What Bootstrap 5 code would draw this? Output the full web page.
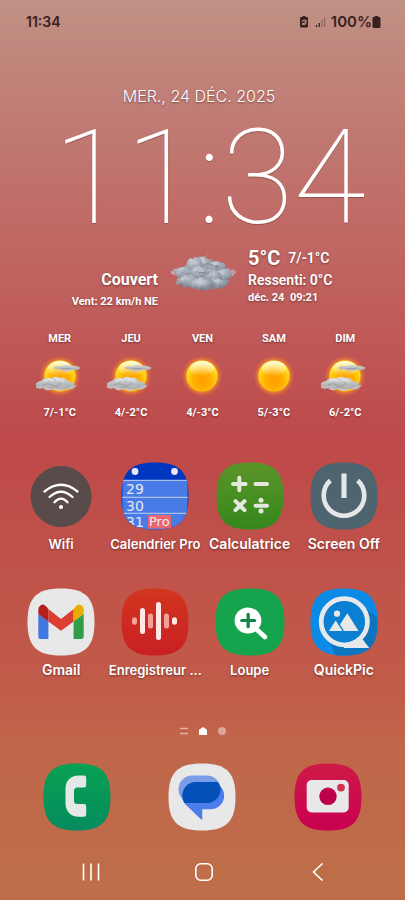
<!DOCTYPE html>
<html lang="fr">
<head>
<meta charset="utf-8">
<meta name="viewport" content="width=device-width, initial-scale=1">
<title>Écran d'accueil</title>
<link href="https://cdn.jsdelivr.net/npm/bootstrap@5.3.0/dist/css/bootstrap.min.css" rel="stylesheet">
<style>
body{font-family:Roboto,sans-serif;color:#fff;background:linear-gradient(#c09184 0%,#c08078 10%,#c06a66 25%,#be494a 49%,#c15b49 76%,#c0664a 83%,#be6f49 100%) no-repeat;min-height:100vh}
.status{font:600 15px/20px Inter,sans-serif;color:#38211f;padding:12px 24px 0 26px}
.status .time{font-size:14px}
.shade{text-shadow:0 1px 2px rgba(60,20,20,.55)}
.date{font:300 16px/20px Inter,sans-serif;margin-top:54px;padding-right:7px}
.clock{font:100 132px/110px Roboto,sans-serif;height:110px;margin-top:17px;padding-left:14px;text-shadow:0 1px 1px rgba(60,20,20,.3)}
.now{display:grid;grid-template-columns:158px 66px 1fr;column-gap:12px;margin-top:13px;height:64px}
.t-lg{font-size:20px;line-height:24px}
.t-md{font-size:16px;line-height:20px}
.t-sm{font-size:14px;line-height:20px}
.t-xs{font-size:11px;line-height:16px}
.forecast{padding:0 24px;margin-top:21px}
.forecast svg{display:block;margin:4px auto}
.apps{padding:0 14px;margin-top:41px;row-gap:34px}
.app{color:#fff;font:600 14px/20px Inter,sans-serif;text-shadow:0 1px 2px rgba(60,20,20,.6);white-space:nowrap;min-width:0}
.app svg,.dock svg{display:block;margin:0 auto}
.app span{display:block;margin-top:4px}
.app .small-label{font-size:13px}
.pager{margin-top:46px;gap:11px;height:10px}
.dock{padding:0 14px;margin-top:27px}
.keys{padding:0 30px 0 34px;margin-top:28px}
.bare{background:none;border:0;padding:0}
</style>
<script src="https://cdn.jsdelivr.net/npm/bootstrap@5.3.0/dist/js/bootstrap.bundle.min.js"></script>
</head>
<body class="d-flex flex-column overflow-x-hidden">
<svg width="0" height="0" class="position-absolute" aria-hidden="true">
<defs>
<path id="tile" d="M34 .5C58.500 .5 67.500 9.500 67.500 34S58.500 67.500 34 67.500 .5 58.500 .5 34 9.500 .5 34 .5Z"/>
<clipPath id="tileclip"><use href="#tile"/></clipPath>
<radialGradient id="sunfill" cx=".5" cy=".65" r=".6"><stop offset="0" stop-color="#ff9c00"/><stop offset=".5" stop-color="#ffb000"/><stop offset=".85" stop-color="#ffd91a"/><stop offset="1" stop-color="#fff03c"/></radialGradient>
<radialGradient id="glow"><stop offset=".66" stop-color="#ffa61c"/><stop offset=".8" stop-color="#f48a2c" stop-opacity=".6"/><stop offset="1" stop-color="#e8602c" stop-opacity="0"/></radialGradient>
<linearGradient id="shine" x2="0" y2="1"><stop offset="0" stop-color="#fff" stop-opacity=".85"/><stop offset="1" stop-color="#fff" stop-opacity="0"/></linearGradient>
<linearGradient id="wisp" x2="0" y2="1"><stop offset="0" stop-color="#dcdee0"/><stop offset=".6" stop-color="#b2b5b8"/><stop offset="1" stop-color="#cdc6c4"/></linearGradient>
<radialGradient id="puff" cx=".42" cy=".25" r=".75"><stop offset="0" stop-color="#ccd1d8"/><stop offset=".5" stop-color="#a0a8b3"/><stop offset="1" stop-color="#76808d"/></radialGradient>
<filter id="rough" x="-10%" y="-10%" width="120%" height="120%"><feTurbulence type="fractalNoise" baseFrequency=".16" numOctaves="3" seed="4"/><feDisplacementMap in="SourceGraphic" scale="6" xChannelSelector="R" yChannelSelector="G"/></filter>
<filter id="rough2" x="-10%" y="-20%" width="120%" height="140%"><feTurbulence type="fractalNoise" baseFrequency=".25" numOctaves="2" seed="7"/><feDisplacementMap in="SourceGraphic" scale="2" xChannelSelector="R" yChannelSelector="G"/></filter>
<g id="sun"><circle cx="24" cy="22" r="21" fill="url(#glow)"/><circle cx="24" cy="22" r="15.500" fill="url(#sunfill)"/><ellipse cx="24" cy="14.500" rx="12" ry="7.500" fill="url(#shine)"/></g>
<g id="suncloud"><use href="#sun"/><g filter="url(#rough2)"><path d="M17 14Q20 11 25 12Q30 9 35 12Q40 11 45 14Q41 17 36 16Q30 19 25 16Q20 16 17 14Z" fill="url(#wisp)"/><path d="M-2 32Q1 27 5 27Q9 22 14 25Q20 21 24 24Q28 22 32 27Q38 28 40 32Q36 37 29 35Q23 39 17 35Q10 38 7 34Q2 36-2 32Z" fill="url(#wisp)"/><path d="M7 31Q12 28 16 31T25 29M13 34Q19 32 24 34T33 32M25 14.500H35" fill="none" stroke="#8a8e93" stroke-opacity=".6"/><path d="M9 27Q14 24 17 27M20 26Q24 24 28 28" fill="none" stroke="#eeeeef"/></g></g>
<linearGradient id="calc" x2="0" y2="1"><stop offset="0" stop-color="#5b9428"/><stop offset="1" stop-color="#35881d"/></linearGradient>
<linearGradient id="rec" x2="0" y2="1"><stop offset="0" stop-color="#d2361f"/><stop offset="1" stop-color="#c91f24"/></linearGradient>
<linearGradient id="tel" x2="0" y2="1"><stop offset="0" stop-color="#08a052"/><stop offset="1" stop-color="#058c5e"/></linearGradient>
<linearGradient id="cam" x2="0" y2="1"><stop offset="0" stop-color="#cf1a48"/><stop offset="1" stop-color="#c80050"/></linearGradient>
</defs>
</svg>

<header class="status d-flex justify-content-between">
<span class="time">11:34</span>
<span class="d-flex align-items-center">
<svg width="28" height="14" viewBox="0 0 28 14" class="me-1" aria-hidden="true"><path d="M3.500 1h3v1h1.300q1.200 0 1.200 1.200v8.100q0 1.200-1.200 1.200H2.200Q1 12.500 1 11.300V3.200Q1 2 2.200 2h1.300Z" fill="#38211f"/><path d="M3 6.500Q5 4.500 7 5.500Q7.500 8.500 5 9.500Q3.500 9.500 3 8.500" fill="none" stroke="#c99a90" stroke-width="1.100"/><path d="M4 9 6 6.800" stroke="#c99a90"/><path d="M17.500 10v2M20.200 8v4" stroke="#38211f" stroke-width="1.300"/><path d="M23 5v7M25.600 2.500v9.500" stroke="#38211f" stroke-opacity=".35" stroke-width="1.300"/></svg>
100%
<svg width="9" height="12" viewBox="0 0 9 12" aria-hidden="true"><path d="M2.800 0h3.400v1h1q1.300 0 1.300 1.300v8.200Q8.500 12 7.200 12H1.800Q.5 12 .5 10.500V2.300Q.5 1 1.800 1h1Z" fill="#38211f"/></svg>
</span>
</header>

<main>
<section aria-label="Horloge et météo">
<div class="date text-center shade">MER., 24 DÉC. 2025</div>
<div class="clock text-center">11:34</div>
<div class="now shade">
<div class="d-flex flex-column justify-content-end text-end"><div class="t-md fw-bold">Couvert</div><div class="t-xs fw-bold mt-1">Vent: 22 km/h NE</div></div>
<svg width="66" height="46" viewBox="0 0 66 46" class="mt-1" role="img" aria-label="Nuages"><g filter="url(#rough)"><ellipse cx="9" cy="23" rx="9" ry="4" fill="#d0a5a6"/><ellipse cx="58" cy="23" rx="9" ry="5" fill="#bd9da1"/><ellipse cx="34" cy="25" rx="25" ry="13" fill="#7d8692"/><g fill="url(#puff)"><circle cx="34" cy="14" r="8"/><ellipse cx="24" cy="15" rx="9" ry="7"/><ellipse cx="46" cy="17" rx="10" ry="6"/><ellipse cx="13" cy="22" rx="9" ry="6"/><ellipse cx="53" cy="25" rx="9" ry="6"/><ellipse cx="29" cy="23" rx="11" ry="7"/><ellipse cx="43" cy="26" rx="10" ry="6"/><ellipse cx="17" cy="31" rx="11" ry="6"/><ellipse cx="48" cy="33" rx="10" ry="5"/><ellipse cx="32" cy="34" rx="13" ry="6"/></g><path d="M34 14l8 1 6 3M28 21l8 3 7-2" fill="none" stroke="#5a6370" stroke-opacity=".5" stroke-width="1.500"/></g></svg>
<div><div class="d-flex align-items-center gap-2"><span class="t-lg fw-bold">5°C</span><span class="t-sm fw-semibold">7/-1°C</span></div><div class="t-sm fw-semibold">Ressenti: 0°C</div><div class="t-xs fw-bold">déc. 24&nbsp; 09:21</div></div>
</div>
<div class="forecast row row-cols-5 g-0 text-center t-xs fw-bold shade">
<div>MER<svg width="48" height="50" viewBox="0 0 48 44" role="img" aria-label="Éclaircies"><use href="#suncloud"/></svg>7/-1°C</div>
<div>JEU<svg width="48" height="50" viewBox="0 0 48 44" role="img" aria-label="Éclaircies"><use href="#suncloud"/></svg>4/-2°C</div>
<div>VEN<svg width="48" height="50" viewBox="0 0 48 44" role="img" aria-label="Soleil"><use href="#sun"/></svg>4/-3°C</div>
<div>SAM<svg width="48" height="50" viewBox="0 0 48 44" role="img" aria-label="Soleil"><use href="#sun"/></svg>5/-3°C</div>
<div>DIM<svg width="48" height="50" viewBox="0 0 48 44" role="img" aria-label="Éclaircies"><use href="#suncloud"/></svg>6/-2°C</div>
</div>
</section>

<section class="apps row row-cols-4 gx-0" aria-label="Applications">
<button type="button" class="bare app"><svg width="68" height="68" aria-hidden="true"><circle cx="34" cy="34.500" r="30.500" fill="#594b49"/><g fill="none" stroke="#fff" stroke-width="2.300" stroke-linecap="round"><path d="M17.500 29.500Q34 16 50.500 29.500M22.500 35Q34 24.500 45.500 35M27.500 40.300Q34 33 40.500 40.300"/></g><circle cx="34" cy="45" r="2.100" fill="#fff"/></svg><span class="small-label">Wifi</span></button>
<button type="button" class="bare app"><svg width="68" height="68" aria-hidden="true"><g clip-path="url(#tileclip)"><path d="M0 0h68v68H0z" fill="#0036bd"/><path d="M1.500 18h65v50h-65z" fill="#497be6"/><path d="M1 18.300h66M1 35.300h66M1 51.300h66" stroke="#c2d3ec"/><circle cx="14" cy="9.500" r="3.400" fill="#e8e8ee"/><circle cx="53.500" cy="9.500" r="3.400" fill="#e8e8ee"/><rect x="27" y="53" width="23" height="13.500" rx="1" fill="#ea6670"/><g font-family="DejaVu Sans" font-size="14" font-weight="400" fill="#e6e9f2" style="text-shadow:none"><text x="5" y="32">29</text><text x="5" y="49">30</text><text x="5" y="65">31</text><text x="28" y="64" font-size="13">Pro</text></g></g></svg><span class="small-label">Calendrier Pro</span></button>
<button type="button" class="bare app"><svg width="68" height="68" aria-hidden="true"><use href="#tile" fill="url(#calc)"/><path d="M17 22h12.600M23.300 15.700v12.600M39.500 22h11.500M19.500 39.200l9 9M28.500 39.200l-9 9M39.500 43.700h11.500" stroke="#e5e8df" stroke-width="4" stroke-linecap="round"/><circle cx="45" cy="38.300" r="2.500" fill="#e5e8df"/><circle cx="45" cy="49.100" r="2.500" fill="#e5e8df"/></svg><span>Calculatrice</span></button>
<button type="button" class="bare app"><svg width="68" height="68" aria-hidden="true"><use href="#tile" fill="#4e646f"/><path d="M20.300 18.500A20.300 20.300 0 1 0 47.700 18.500" fill="none" stroke="#e4e6e7" stroke-width="4.600"/><path d="M34 11.500V36" stroke="#e4e6e7" stroke-width="5.200"/></svg><span>Screen Off</span></button>
<button type="button" class="bare app"><svg width="68" height="68" aria-hidden="true"><use href="#tile" fill="#e9e8e8"/><path d="M11.300 26 21.400 33V51H13.300q-2 0-2-2Z" fill="#4279e0"/><path d="M56.700 26 46.600 33V51H54.700q2 0 2-2Z" fill="#319c49"/><path d="M21.400 21 34 31 46.600 21V33.500L34 42.800 21.400 33.500Z" fill="#dc3e32"/><path d="M11.300 26V21.500Q11.800 17 16 16.500Q18 16.500 21.400 21V33.500Z" fill="#b51f1f"/><path d="M56.700 26V21.500Q56.200 17 52 16.500Q50 16.500 46.600 21V33.500Z" fill="#e5ad06"/></svg><span>Gmail</span></button>
<button type="button" class="bare app"><svg width="68" height="68" aria-hidden="true"><use href="#tile" fill="url(#rec)"/><g stroke-width="5" stroke-linecap="round"><path d="M21.500 22.500V43.500M37.500 16.500V49.500M53.500 31.800V34.200" stroke="#ffe8e5"/><path d="M13.500 31.800V34.200M29.500 28V38M45.500 28V38" stroke="#f3a19a"/></g></svg><span class="small-label">Enregistreur ...</span></button>
<button type="button" class="bare app"><svg width="70" height="68" viewBox="0 0 68 68" preserveAspectRatio="none" aria-hidden="true"><use href="#tile" fill="#16a34e"/><circle cx="32" cy="32.500" r="13" fill="#fff"/><path d="M40.500 41.500 48.500 49" stroke="#fff" stroke-width="4.500" stroke-linecap="round"/><path d="M26 32.500H38.500M32.200 26.300V38.700" stroke="#11854a" stroke-width="3.200" stroke-linecap="round"/></svg><span class="small-label">Loupe</span></button>
<button type="button" class="bare app"><svg width="68" height="68" aria-hidden="true"><g clip-path="url(#tileclip)"><path d="M0 0h68v68H0z" fill="#0b8be6"/><path d="M51 17 68 30V68H26L18 51Z" fill="#0d74be"/><circle cx="34.300" cy="33.700" r="22" fill="#0b80d3"/></g><circle cx="34.300" cy="33.700" r="23" fill="none" stroke="#e6e8ea" stroke-width="5"/><path d="M34 58.800 50 48 59.300 60H34Z" fill="#e6e8ea"/><circle cx="34.300" cy="33.700" r="20.700" fill="#0b80d3"/><path d="M19 43 25.700 32.500 32.500 43ZM30 36.500 37.300 25.300 48.500 43H34Z" fill="#e6e8ea"/><circle cx="27" cy="25.700" r="3.100" fill="#e6e8ea"/></svg><span>QuickPic</span></button>
</section>

<div class="pager d-flex justify-content-center align-items-center" aria-hidden="true">
<svg width="8" height="8"><path d="M0 1.500h8M0 6.500h8" stroke="#e3b0a2" stroke-width="1.500"/></svg>
<svg width="8" height="8"><path d="M4 0 8 2.800V8H0V2.800Z" fill="#fff"/></svg>
<svg width="8" height="8"><circle cx="4" cy="4" r="4" fill="#dda596"/></svg>
</div>
</main>

<nav class="dock row row-cols-3 g-0" aria-label="Favoris">
<button type="button" class="bare" aria-label="Téléphone"><svg width="68" height="68"><use href="#tile" fill="url(#tel)"/><path d="M36 12.500H41q2.200 0 2.200 2.200V22.200q0 2.200-2.200 2.200H34.500Q31 24.400 31 28V38Q31 41 34.500 41H41q2.200 0 2.200 2.200V51.500q0 2.200-2.200 2.200H36C27 53.700 22.500 48 22.500 40V26C22.500 18 27 12.500 36 12.500Z" fill="#e6e8e7"/></svg></button>
<button type="button" class="bare" aria-label="Messages"><svg width="68" height="68"><use href="#tile" fill="#e8e8e8"/><rect x="10.500" y="12.500" width="42" height="27.500" rx="13.700" fill="#7b9ce6"/><path d="M28 19H42.500A13.600 13.600 0 0 1 42.500 46.300H34.300V55.500Q34.300 57.500 32.700 56L18 42Q14.300 38 14.300 32.700A13.700 13.700 0 0 1 28 19Z" fill="#4d7dea"/><path d="M28 19H49.500Q52.500 22 52.500 26.500A13.500 13.500 0 0 1 39 40H16.500Q14.300 37 14.300 32.700A13.700 13.700 0 0 1 28 19Z" fill="#0350b9"/></svg></button>
<button type="button" class="bare" aria-label="Appareil photo"><svg width="68" height="68"><use href="#tile" fill="url(#cam)"/><rect x="12.700" y="17" width="42" height="32.500" rx="5" fill="#e9e8e8"/><circle cx="34" cy="33.300" r="8.700" fill="#bd0049"/><circle cx="47" cy="24.600" r="3.900" fill="#d2304c"/></svg></button>
</nav>

<nav class="keys row row-cols-3 g-0" aria-label="Navigation">
<button type="button" class="bare" aria-label="Applications récentes"><svg width="20" height="20" class="shade"><path d="M2.500 1.500v17M10 1.500v17M17.500 1.500v17" stroke="#fff" stroke-width="1.600"/></svg></button>
<button type="button" class="bare" aria-label="Accueil"><svg width="20" height="20"><rect x="1.800" y="1.800" width="16.400" height="16.400" rx="5" fill="none" stroke="#fff" stroke-width="1.600"/></svg></button>
<button type="button" class="bare" aria-label="Retour"><svg width="20" height="20"><path d="M14.500 1.500 5.500 10 14.500 18.500" fill="none" stroke="#fff" stroke-width="1.600"/></svg></button>
</nav>
</body>
</html>
